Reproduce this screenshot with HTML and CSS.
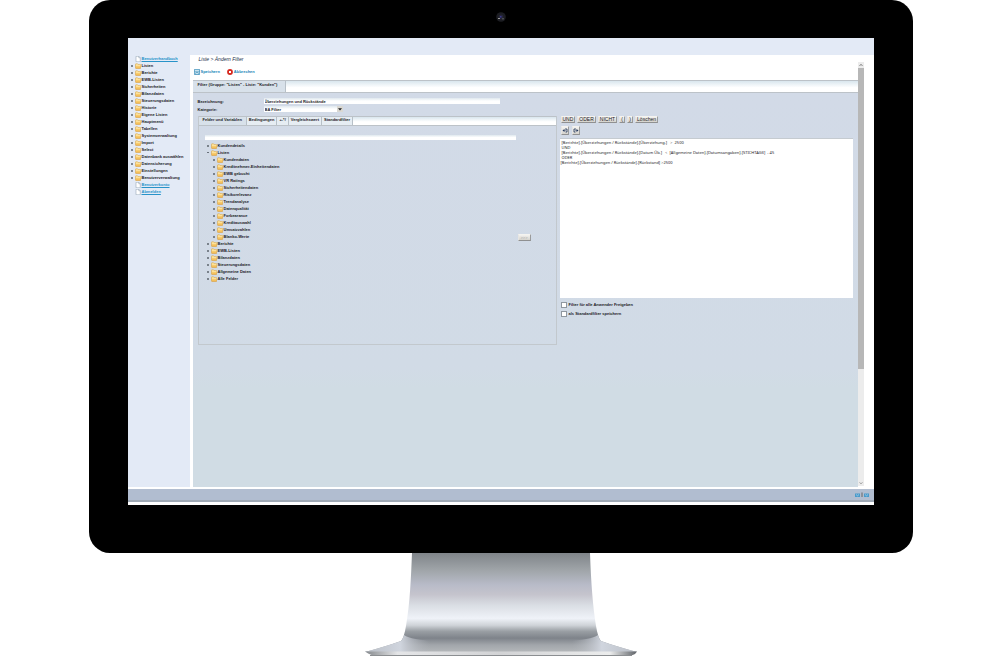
FILE: index.html
```html
<!DOCTYPE html>
<html lang="de">
<head>
<meta charset="utf-8">
<title>Ändern Filter</title>
<link rel="stylesheet" href="styles.css">
</head>
<body>
<svg class="defs" aria-hidden="true">
  <defs>
    <linearGradient id="gold" x1="0" y1="0" x2="0" y2="1"><stop offset="0" stop-color="#ffe9a0"/><stop offset="1" stop-color="#f2b548"/></linearGradient>
    <symbol id="folder" viewBox="0 0 12 12"><path d="M1 2.5Q1 1.5 2 1.5H5L6 3H10.5Q11.5 3 11.5 4V10Q11.5 11 10.5 11H2Q1 11 1 10Z" fill="url(#gold)" stroke="#d59a3a"/><path d="M2 4.6H10.7" stroke="#fff3c4"/></symbol>
    <symbol id="page" viewBox="0 0 12 12"><path d="M2 .5H7.5L10.5 3.5V11.5H2Z" fill="#fff" stroke="#8496a8"/><path d="M7.5 .5V3.5H10.5" fill="none" stroke="#8496a8"/></symbol>
  </defs>
</svg>
<div class="monitor">
  <svg class="camera" viewBox="0 0 10 10" aria-hidden="true"><circle cx="5" cy="5" r="4.8" fill="#1c1d22"/><circle cx="5" cy="5" r="2.4" fill="#25263a"/><path d="M2 6H4V7H2Z" fill="#999"/><path d="M4 4H5.5V5.5H4Z" fill="#3b3690"/><path d="M6 6H8V7.5H6Z" fill="#4a4b50"/></svg>
  <div class="screen">
    <header class="banner"></header>
    <div class="workspace">
      <nav class="sidebar">
        <ul class="tree">
          <li class="leaf"><svg><use href="#page"/></svg><a href="#">Benutzerhandbuch</a></li>
          <li><svg><use href="#folder"/></svg>Listen</li>
          <li><svg><use href="#folder"/></svg>Berichte</li>
          <li><svg><use href="#folder"/></svg>EWB-Listen</li>
          <li><svg><use href="#folder"/></svg>Sicherheiten</li>
          <li><svg><use href="#folder"/></svg>Bilanzdaten</li>
          <li><svg><use href="#folder"/></svg>Steuerungsdaten</li>
          <li><svg><use href="#folder"/></svg>Historie</li>
          <li><svg><use href="#folder"/></svg>Eigene Listen</li>
          <li><svg><use href="#folder"/></svg>Hauptmenü</li>
          <li><svg><use href="#folder"/></svg>Tabellen</li>
          <li><svg><use href="#folder"/></svg>Systemverwaltung</li>
          <li><svg><use href="#folder"/></svg>Import</li>
          <li><svg><use href="#folder"/></svg>Select</li>
          <li><svg><use href="#folder"/></svg>Datenbank auswählen</li>
          <li><svg><use href="#folder"/></svg>Datensicherung</li>
          <li><svg><use href="#folder"/></svg>Einstellungen</li>
          <li><svg><use href="#folder"/></svg>Benutzerverwaltung</li>
          <li class="leaf"><svg><use href="#page"/></svg><a href="#">Benutzerkonto</a></li>
          <li class="leaf"><svg><use href="#page"/></svg><a href="#">Abmelden</a></li>
        </ul>
      </nav>
      <main class="content">
        <p class="crumbs">Liste &gt; Ändern Filter</p>
        <div class="toolbar">
          <button type="button" class="action"><svg viewBox="0 0 12 12"><path d="M.8 .8H11.2V11.2H.8Z" fill="#e8f5fb" stroke="#3288b5" stroke-width="1.5"/><path d="M1 4.5H11M3.5 11V7H8.5V11" fill="none" stroke="#3288b5" stroke-width="1.3"/></svg>Speichern</button>
          <button type="button" class="action"><svg viewBox="0 0 12 12"><circle cx="6" cy="6" r="5.8" fill="#d7291f"/><path d="M4 4L8 8M8 4L4 8" stroke="#fff" stroke-width="2"/></svg>Abbrechen</button>
        </div>
        <div class="strip title-strip"><h1 class="tab current">Filter (Gruppe: "Listen" - Liste: "Kunden")</h1></div>
        <form class="panel">
          <div class="field"><label for="name">Bezeichnung:</label><input id="name" class="box name" type="text" value="Überziehungen und Rückstände"></div>
          <div class="field"><label for="cat">Kategorie:</label><span class="picker"><select id="cat" class="box"><option>BA Filter</option></select><svg class="arrow" viewBox="0 0 6 6" aria-hidden="true"><path d="M0 0H6V6H0Z" fill="#dad8d2"/><path d="M1 2.2H5L3 4.6Z" fill="#222"/></svg></span></div>
          <div class="columns">
            <section class="source">
              <div class="strip">
                <button type="button" class="tab current">Felder und Variablen</button><button type="button" class="tab">Bedingungen</button><button type="button" class="tab">+-*/</button><button type="button" class="tab">Vergleichswert</button><button type="button" class="tab">Standardfilter</button>
              </div>
              <div class="source-body">
                <div class="fields">
                  <input class="box search" type="text" aria-label="Suche">
                  <ul class="tree">
                    <li><svg><use href="#folder"/></svg>Kundendetails</li>
                    <li class="open"><svg><use href="#folder"/></svg>Listen</li>
                    <li class="sub"><svg><use href="#folder"/></svg>Kundendaten</li>
                    <li class="sub"><svg><use href="#folder"/></svg>Kreditnehmer-Einheitendaten</li>
                    <li class="sub"><svg><use href="#folder"/></svg>EWB gebucht</li>
                    <li class="sub"><svg><use href="#folder"/></svg>VR Ratings</li>
                    <li class="sub"><svg><use href="#folder"/></svg>Sicherheitendaten</li>
                    <li class="sub"><svg><use href="#folder"/></svg>Risikorelevanz</li>
                    <li class="sub"><svg><use href="#folder"/></svg>Trendanalyse</li>
                    <li class="sub"><svg><use href="#folder"/></svg>Datenqualität</li>
                    <li class="sub"><svg><use href="#folder"/></svg>Forbearance</li>
                    <li class="sub"><svg><use href="#folder"/></svg>Kreditauswahl</li>
                    <li class="sub"><svg><use href="#folder"/></svg>Umsatzzahlen</li>
                    <li class="sub"><svg><use href="#folder"/></svg>Blanko-Werte</li>
                    <li><svg><use href="#folder"/></svg>Berichte</li>
                    <li><svg><use href="#folder"/></svg>EWB-Listen</li>
                    <li><svg><use href="#folder"/></svg>Bilanzdaten</li>
                    <li><svg><use href="#folder"/></svg>Steuerungsdaten</li>
                    <li><svg><use href="#folder"/></svg>Allgemeine Daten</li>
                    <li><svg><use href="#folder"/></svg>Alle Felder</li>
                  </ul>
                </div>
                <button type="button" class="key insert">&gt;&gt;&gt;</button>
              </div>
            </section>
            <section class="editor">
              <div class="keys">
                <button type="button" class="key">UND</button><button type="button" class="key">ODER</button><button type="button" class="key">NICHT</button><button type="button" class="key">(</button><button type="button" class="key">)</button><button type="button" class="key">Löschen</button>
              </div>
              <div class="history">
                <button type="button" class="step" aria-label="Rückgängig"><svg viewBox="0 0 12 12"><path d="M1 6L5 3V9Z" fill="#20365c"/><path d="M5 6H7M6 3H10V9H7" fill="none" stroke="#20365c" stroke-width="1.6"/></svg></button>
                <button type="button" class="step" aria-label="Wiederholen"><svg viewBox="0 0 12 12"><path d="M11 6L7 3V9Z" fill="#20365c"/><path d="M7 6H5M6 3H2V9H5" fill="none" stroke="#20365c" stroke-width="1.6"/></svg></button>
              </div>
              <textarea class="formula" aria-label="Filterausdruck" spellcheck="false"> [Berichte].[Überziehungen / Rückstände].[Überziehung.]   &gt;  2500
 UND
 [Berichte].[Überziehungen / Rückstände].[Datum Üb.]   &lt;  [Allgemeine Daten].[Datumsangaben].[STICHTAG3]  - 45
 ODER
[Berichte].[Überziehungen / Rückstände].[Rückstand] &gt;2500</textarea>
              <label class="option"><input type="checkbox">Filter für alle Anwender Freigeben</label>
              <label class="option"><input type="checkbox">als Standardfilter speichern</label>
            </section>
          </div>
        </form>
      </main>
      <div class="scrollbar" aria-hidden="true">
        <svg viewBox="0 0 6 6"><path d="M1.5 4L3 2.2L4.5 4" fill="none" stroke="#888"/></svg>
        <div class="thumb"></div>
        <svg viewBox="0 0 6 6"><path d="M1.5 2.2L3 4L4.5 2.2" fill="none" stroke="#aaa"/></svg>
      </div>
    </div>
    <footer class="status">
      <svg viewBox="0 0 14 6" aria-hidden="true"><path d="M0 1.5H5V5H0ZM9 1.5H14V5H9Z" fill="#4a9aca"/><path d="M1 2.5L2.5 3.8L4 2.5M10 2.5L11.5 3.8L13 2.5" fill="none" stroke="#b9dcf0" stroke-width=".7"/><path d="M7 .5V5" stroke="#666"/></svg>
    </footer>
  </div>
</div>
<svg class="stand" viewBox="0 0 272 103" aria-hidden="true">
  <defs>
    <linearGradient id="steel" gradientUnits="userSpaceOnUse" x1="0" y1="0" x2="0" y2="99">
      <stop offset="0" stop-color="#7f8489"/><stop offset=".17" stop-color="#9fa4a8"/><stop offset=".32" stop-color="#b8bbc8"/><stop offset=".42" stop-color="#c5c4cd"/><stop offset=".53" stop-color="#dadee4"/><stop offset=".66" stop-color="#eff2f8"/><stop offset=".73" stop-color="#cfd3d8"/><stop offset=".79" stop-color="#9a9fa4"/><stop offset=".86" stop-color="#7e838a"/><stop offset=".93" stop-color="#a2a6ab"/><stop offset="1" stop-color="#b4b7ba"/>
    </linearGradient>
    <linearGradient id="wing"><stop offset="0" stop-color="#b9bec6"/><stop offset=".13" stop-color="#d0d5de"/><stop offset=".24" stop-color="#b0b4ba" stop-opacity="0"/><stop offset=".76" stop-color="#b0b4ba" stop-opacity="0"/><stop offset=".87" stop-color="#d0d5de"/><stop offset="1" stop-color="#b9bec6"/></linearGradient>
    <linearGradient id="rim"><stop offset="0" stop-color="#85898d"/><stop offset=".12" stop-color="#e4e5e7"/><stop offset=".5" stop-color="#d2d3d5"/><stop offset=".9" stop-color="#eceded"/><stop offset="1" stop-color="#5f6368"/></linearGradient>
  </defs>
  <path d="M47 0H225C226 30 228 55 231 73Q233 85 236 88Q250 93 272 99H0Q22 93 36 88Q39 85 41 73C45 50 46 25 47 0Z" fill="url(#steel)"/>
  <path d="M36 88Q22 93 0 99H272Q250 93 236 88Q234 86 233 82Q226 87 200 88H72Q46 87 39 82Q38 86 36 88Z" fill="url(#wing)"/>
  <path d="M0 98.5H272L270 101Q266 103 258 103H14Q6 103 0 98.5Z" fill="url(#rim)"/>
  <path d="M5 102.5H267" stroke="#8b8e91"/>
</svg>
</body>
</html>
```
FILE: styles.css
```css
* { box-sizing: border-box; }
body {
  margin: 0;
  background: #fff;
  color: #1c2126;
  font: bold 4px/7px "Liberation Sans", Arial, sans-serif;
  display: flex;
  flex-direction: column;
  align-items: center;
}
button, input, select, textarea { font: inherit; color: inherit; margin: 0; padding: 0; border: 0; border-radius: 0; }
svg { flex: none; display: block; }
ul, p, h1 { margin: 0; padding: 0; list-style: none; font-size: inherit; }
a { color: #2793c9; }
.defs { position: absolute; width: 0; height: 0; }

.monitor {
  position: relative;
  width: 82.4%;
  margin-left: 1px;
  padding: 38px 39px 48px;
  background: #000;
  border-radius: 21px;
}
.camera { position: absolute; top: 12px; left: 50%; width: 10px; height: 10px; margin-left: -5px; }
.screen { min-height: 467px; background: #fff; display: flex; flex-direction: column; }
.banner { height: 17px; background: #e3eaf6; }
.workspace { flex: 1; display: flex; padding-right: 10px; }
.sidebar { width: 62px; background: #e3eaf6; }
.content { flex: 1; min-width: 0; margin-left: 3px; display: flex; flex-direction: column; }

.tree li { display: flex; align-items: center; height: 7px; white-space: nowrap; }
.tree svg { width: 6px; height: 6px; margin: 0 1px 0 2px; }
.tree li::before { content: ""; width: 2px; height: 2px; margin-left: 2px; background: #5c646d; border-radius: 1px; }
.tree .leaf::before { visibility: hidden; }
.tree .open::before { height: 1px; }
.tree .sub { padding-left: 6px; }
.sidebar .tree { padding-left: 1px; }

.crumbs { padding: 1px 6px 0; font: italic 5px/7px "Liberation Sans", Arial, sans-serif; color: #20304a; }
.toolbar { display: flex; gap: 7px; padding: 5px 1px; }
.action { display: flex; align-items: center; gap: 1px; background: none; color: #2385b8; height: 7px; }
.action svg { width: 6px; height: 6px; }

.strip { display: flex; height: 10px; background: linear-gradient(#d9e6ee, #fff 60%); border: solid #bcc2c8; border-width: 1px 0; }
.tab { padding: 0 2px; line-height: 6px; background: #e6edf3; border-right: 1px solid #b7c0c8; white-space: nowrap; font-weight: bold; }
.tab.current { padding: 0 4px; background: #d8e1ea; }
.source .tab { padding-bottom: 2px; }
.title-strip { height: 13px; }
.title-strip .tab.current { padding: 0 8px 0 5px; line-height: 7px; }

.panel { flex: 1; padding: 4px 5px; background: linear-gradient(#d2dae7, #d1dbe6 70%, #d0dce4 75%); }
.field { display: flex; align-items: center; height: 8px; }
.field label { width: 66px; }
.box { display: block; height: 6px; padding: 0 1px; background: linear-gradient(#dfe8ee, #fff 50%); line-height: 5px; }
.name { width: 236px; }
.picker { position: relative; width: 79px; }
.picker select { width: 100%; appearance: none; }
.arrow { position: absolute; top: 0; right: 0; width: 6px; height: 6px; }

.columns { display: grid; grid-template-columns: 359fr 293fr; gap: 3px; margin-top: 3px; }
.source { border: 1px solid #c2c8cd; border-top: 0; min-height: 229px; display: flex; flex-direction: column; }
.source-body { flex: 1; display: flex; align-items: center; gap: 2px; padding: 9px 25px 5px 6px; }
.fields { flex: 1; align-self: stretch; }
.search { width: 100%; height: 5px; }
.fields .tree { padding-top: 2px; }
.key, .step { background: linear-gradient(#f3f2ef, #d5d3cd); border: 1px solid; border-color: #f4f3f0 #9a9b9c #8f9091 #e6e5e2; }
.key { height: 7px; padding: 0 1px; font: 5px/5px "Liberation Sans", Arial, sans-serif; min-width: 6px; }
.insert { width: 13px; color: #a5a5a5; font-size: 4px; }

.editor { display: flex; flex-direction: column; }
.keys { display: flex; gap: 2px; padding-left: 1px; }
.history { display: flex; gap: 3px; padding: 3px 1px; }
.step { width: 8px; height: 9px; }
.step svg { width: 6px; height: 7px; }
.formula {
  height: 160px;
  padding: 1px;
  background: #fff;
  border-top: 1px solid #c5cbd0;
  font: 4px/5px "Noto Sans", "Open Sans", sans-serif;
  resize: none;
  overflow: hidden;
  margin-bottom: 2px;
}
.option { display: flex; align-items: center; gap: 2px; height: 9px; padding-left: 1px; }
.option input { appearance: none; width: 6px; height: 6px; background: #fff; border: 1px solid #8f979f; }

.scrollbar { width: 6px; margin: 7px 0 1px; display: flex; flex-direction: column; background: #ececec; }
.scrollbar svg { width: 6px; height: 6px; }
.thumb { height: 71%; background: #b7b7b7; margin-bottom: auto; }
.status {
  height: 13px;
  margin: 2px 0 3px;
  padding: 0 5px;
  background: #b1bdd0;
  border-bottom: 2px solid #9fa9b5;
  display: flex;
  align-items: center;
  justify-content: flex-end;
}
.status svg { width: 14px; height: 6px; }
.stand { width: 272px; height: 103px; margin-left: 2px; }
```
